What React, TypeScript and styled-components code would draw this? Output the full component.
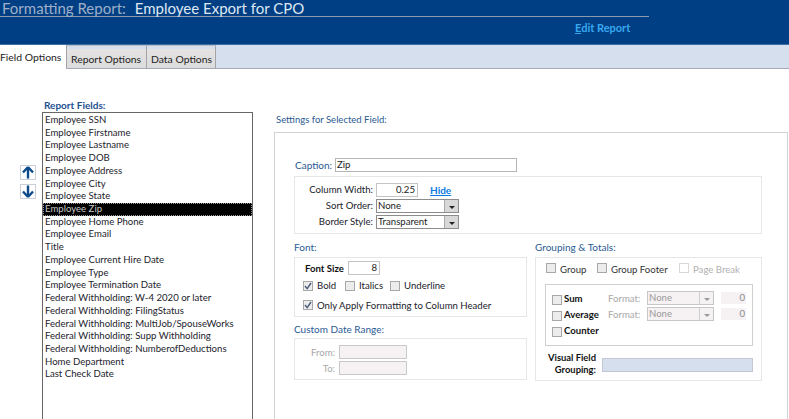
import styled, { createGlobalStyle } from "styled-components"

const GlobalStyle = createGlobalStyle`
  html, body { margin: 0; padding: 0; background: #fff; }
  body { font-family: Lato, "Open Sans", sans-serif; font-size: 9.6px; color: #1c1c2c; }
`

const FIELDS = [
  "Employee SSN",
  "Employee Firstname",
  "Employee Lastname",
  "Employee DOB",
  "Employee Address",
  "Employee City",
  "Employee State",
  "Employee Zip",
  "Employee Home Phone",
  "Employee Email",
  "Title",
  "Employee Current Hire Date",
  "Employee Type",
  "Employee Termination Date",
  "Federal Withholding: W-4 2020 or later",
  "Federal Withholding: FilingStatus",
  "Federal Withholding: MultiJob/SpouseWorks",
  "Federal Withholding: Supp Withholding",
  "Federal Withholding: NumberofDeductions",
  "Home Department",
  "Last Check Date",
]

const Arrow = ({ down }: { down?: boolean }) => (
  <svg width="12" height="13" viewBox="0 0 12 13" style={{ transform: down ? "rotate(180deg)" : undefined }}>
    <path d="M6 1 L11 6.5 M6 1 L1 6.5 M6 1 V12.5" stroke="#0d4a8b" strokeWidth="2.4" fill="none" />
  </svg>
)

const Check = ({ checked, disabled, $mt }: { checked?: boolean; disabled?: boolean; $mt?: number }) => (
  <CheckBox $disabled={disabled} $mt={$mt}>
    {checked && (
      <svg width="10" height="10" viewBox="0 0 10 10">
        <path d="M2 5 L4.2 7.6 L8 2" stroke="#4a5a7a" strokeWidth="1.4" fill="none" />
      </svg>
    )}
  </CheckBox>
)

const Select = ({ value, width, disabled }: { value: string; width: number; disabled?: boolean }) => (
  <SelectBox $width={width} $disabled={disabled}>
    <SelectValue>{value}</SelectValue>
    <SelectButton $disabled={disabled}>
      <svg width="6" height="3" viewBox="0 0 6 3">
        <path d="M0 0 H6 L3 3 Z" fill={disabled ? "#999" : "#222"} />
      </svg>
    </SelectButton>
  </SelectBox>
)

export default function App() {
  return (
    <Page>
      <GlobalStyle />
      <Header>
        <TitleBar>
          <TitleMuted>Formatting Report:</TitleMuted>
          <TitleName>Employee Export for CPO</TitleName>
        </TitleBar>
        <EditLink><u>E</u>dit Report</EditLink>
      </Header>
      <Tabs>
        <Tab $active $width={67}>Field Options</Tab>
        <Tab $width={80}>Report Options</Tab>
        <Tab $width={69}>Data Options</Tab>
      </Tabs>
      <Body>
        <ArrowColumn>
          <ArrowButton><Arrow /></ArrowButton>
          <ArrowButton><Arrow down /></ArrowButton>
        </ArrowColumn>
        <FieldsColumn>
          <FieldsLabel>Report Fields:</FieldsLabel>
          <FieldList>
            {FIELDS.map((f) => (
              <FieldItem key={f} $selected={f === "Employee Zip"}>{f}</FieldItem>
            ))}
          </FieldList>
        </FieldsColumn>
        <SettingsColumn>
          <SettingsLabel>Settings for Selected Field:</SettingsLabel>
          <SettingsPanel>
            <CaptionRow>
              <CaptionLabel>Caption:</CaptionLabel>
              <TextBox $width={182} $height={14}>Zip</TextBox>
            </CaptionRow>
            <ColumnPanel>
              <FormRow>
                <FormLabel>Column Width:</FormLabel>
                <NumberBox $width={42}>0.25</NumberBox>
                <HideLink>Hide</HideLink>
              </FormRow>
              <FormRow>
                <FormLabel>Sort Order:</FormLabel>
                <Select value="None" width={83} />
              </FormRow>
              <FormRow>
                <FormLabel>Border Style:</FormLabel>
                <Select value="Transparent" width={83} />
              </FormRow>
            </ColumnPanel>
            <Columns>
              <LeftColumn>
                <SectionLabel>Font:</SectionLabel>
                <FontPanel>
                  <FontSizeRow>
                    <strong>Font Size</strong>
                    <NumberBox $width={32}>8</NumberBox>
                  </FontSizeRow>
                  <CheckRow>
                    <CheckLabel $width={42}><Check checked />Bold</CheckLabel>
                    <CheckLabel $width={45}><Check />Italics</CheckLabel>
                    <CheckLabel><Check />Underline</CheckLabel>
                  </CheckRow>
                  <OnlyRow><Check checked />Only Apply Formatting to Column Header</OnlyRow>
                </FontPanel>
                <DateLabel>Custom Date Range:</DateLabel>
                <DatePanel>
                  <DateRow><DateText>From:</DateText><DateBox /></DateRow>
                  <DateRow><DateText>To:</DateText><DateBox /></DateRow>
                </DatePanel>
              </LeftColumn>
              <RightColumn>
                <SectionLabel>Grouping &amp; Totals:</SectionLabel>
                <GroupPanel>
                  <GroupRow>
                    <GroupLabel $width={51}><Check $mt={-3} />Group</GroupLabel>
                    <GroupLabel $width={82}><Check $mt={-3} />Group Footer</GroupLabel>
                    <GroupLabel $disabled><Check disabled $mt={-3} />Page Break</GroupLabel>
                  </GroupRow>
                  <TotalsPanel>
                    <TotalRow>
                      <TotalName><Check $mt={4} />Sum</TotalName>
                      <FormatText>Format:</FormatText>
                      <Select value="None" width={67} disabled />
                      <ValueBox>0</ValueBox>
                    </TotalRow>
                    <TotalRow>
                      <TotalName><Check $mt={4} />Average</TotalName>
                      <FormatText>Format:</FormatText>
                      <Select value="None" width={67} disabled />
                      <ValueBox>0</ValueBox>
                    </TotalRow>
                    <TotalRow>
                      <TotalName><Check $mt={4} />Counter</TotalName>
                    </TotalRow>
                  </TotalsPanel>
                  <VisualRow>
                    <VisualLabel>Visual Field<br />Grouping:</VisualLabel>
                    <VisualBar />
                  </VisualRow>
                </GroupPanel>
              </RightColumn>
            </Columns>
          </SettingsPanel>
        </SettingsColumn>
      </Body>
    </Page>
  )
}

const Page = styled.div`
  width: 789px;
  height: 419px;
  overflow: hidden;
  display: flex;
  flex-direction: column;
`

const Header = styled.header`
  height: 44px;
  flex: none;
  background: #003f84;
  border-bottom: 1px solid #3b6ea5;
`

const TitleBar = styled.div`
  width: 649px;
  height: 16px;
  border-bottom: 1px solid #8d9aae;
  display: flex;
  gap: 9px;
  font-size: 15px;
  line-height: 16px;
  white-space: nowrap;
`

const TitleMuted = styled.span`
  color: #9fb0c8;
  margin-left: 2px;
`

const TitleName = styled.span`
  color: #dfe7f2;
`

const EditLink = styled.div`
  margin: 4px 0 0 575px;
  color: #38a8f0;
  font-size: 11px;
  font-weight: 700;
  line-height: 14px;
`

const Tabs = styled.nav`
  height: 24px;
  flex: none;
  background: #d6dfee;
  border-bottom: 1px solid #a6abb8;
  display: flex;
  align-items: stretch;
  box-sizing: border-box;
`

const Tab = styled.div<{ $active?: boolean; $width: number }>`
  box-sizing: border-box;
  width: ${(p) => p.$width}px;
  padding: ${(p) => (p.$active ? "5px 0 0 0" : "6px 0 0 4px")};
  height: ${(p) => (p.$active ? 24 : 23)}px;
  background: ${(p) => (p.$active ? "#fff" : "linear-gradient(#d6dfee 0 3px, #e4e2e2 3px, #dcdcdc)")};
  border-right: 1px solid #a3a3a8;
  border-top: ${(p) => (p.$active ? "0" : "1px solid #b9bcc4")};
  font-size: 10.4px;
  line-height: 14px;
  white-space: nowrap;
  color: #222;
`

const Body = styled.main`
  display: flex;
  flex: 1;
  min-height: 0;
  align-items: flex-start;
`

const ArrowColumn = styled.div`
  width: 42px;
  flex: none;
  box-sizing: border-box;
  padding: 96px 0 0 20px;
  display: flex;
  flex-direction: column;
  gap: 4px;
`

const ArrowButton = styled.div`
  width: 16px;
  height: 15px;
  box-sizing: border-box;
  border: 1px solid #c8cfdb;
  display: flex;
  align-items: center;
  justify-content: center;
`

const FieldsColumn = styled.section`
  width: 211px;
  flex: none;
  padding-top: 29px;
`

const FieldsLabel = styled.div`
  color: #1d4f8f;
  font-weight: 700;
  font-size: 10px;
  line-height: 14px;
  margin-left: 2px;
`

const FieldList = styled.ul`
  margin: 0;
  padding: 1px 0 0;
  list-style: none;
  height: 320px;
  box-sizing: border-box;
  border: 1px solid #666;
`

const FieldItem = styled.li<{ $selected?: boolean }>`
  height: 12.72px;
  line-height: 12.72px;
  padding-left: 2px;
  white-space: nowrap;
  color: ${(p) => (p.$selected ? "#c8c8c8" : "#1c1c2c")};
  background: ${(p) => (p.$selected ? "#000" : "transparent")};
  outline: ${(p) => (p.$selected ? "1px dotted #999" : "0")};
  outline-offset: -1px;
`

const SettingsColumn = styled.section`
  width: 514px;
  flex: none;
  margin-left: 21px;
  padding-top: 44px;
`

const SettingsLabel = styled.div`
  color: #2a5a94;
  font-size: 9.5px;
  line-height: 14px;
  margin-left: 2px;
  margin-bottom: 5px;
`

const SettingsPanel = styled.div`
  box-sizing: border-box;
  height: 300px;
  border: 1px solid #d2d2d2;
  border-bottom: 0;
  padding: 25px 0 0 19px;
`

const CaptionRow = styled.div`
  display: flex;
  align-items: center;
  gap: 4px;
  height: 14px;
  margin-left: 1px;
`

const SectionLabel = styled.div`
  color: #2a5a94;
  font-size: 10px;
  line-height: 13px;
`

const CaptionLabel = styled(SectionLabel)`
  width: 36px;
`

const TextBox = styled.div<{ $width: number; $height: number }>`
  width: ${(p) => p.$width}px;
  height: ${(p) => p.$height}px;
  line-height: ${(p) => p.$height - 2}px;
  box-sizing: border-box;
  border: 1px solid #b5b5b5;
  padding-left: 1px;
  color: #222;
`

const ColumnPanel = styled.div`
  box-sizing: border-box;
  width: 468px;
  height: 58px;
  margin-top: 4px;
  border: 1px solid #e6e6e6;
  padding-top: 5px;
  display: flex;
  flex-direction: column;
  gap: 1px;
`

const FormRow = styled.div`
  display: flex;
  align-items: center;
  height: 15px;
`

const FormLabel = styled.div`
  width: 78px;
  text-align: right;
  margin-right: 3px;
`

const NumberBox = styled.div<{ $width: number }>`
  width: ${(p) => p.$width}px;
  height: 14px;
  line-height: 12px;
  box-sizing: border-box;
  border: 1px solid #c4c4c4;
  padding-right: 2px;
  text-align: right;
  color: #222;
`

const HideLink = styled.a`
  margin-left: 12px;
  color: #0a7be0;
  font-weight: 700;
  font-size: 10px;
  text-decoration: underline;
`

const SelectBox = styled.div<{ $width: number; $disabled?: boolean }>`
  width: ${(p) => p.$width}px;
  height: 14px;
  box-sizing: border-box;
  display: flex;
  border: 1px solid ${(p) => (p.$disabled ? "#c9c6c6" : "#8c8c8c")};
  background: ${(p) => (p.$disabled ? "#f6f2f3" : "#fff")};
  color: ${(p) => (p.$disabled ? "#9a9a9a" : "#222")};
`

const SelectValue = styled.div`
  flex: 1;
  line-height: 12px;
  padding-left: 1px;
`

const SelectButton = styled.div<{ $disabled?: boolean }>`
  width: 14px;
  background: ${(p) => (p.$disabled ? "#f4f2f2" : "#d8d8d8")};
  border-left: 1px solid ${(p) => (p.$disabled ? "#cfcfcf" : "#aaa")};
  display: flex;
  align-items: flex-end;
  justify-content: center;
  padding-bottom: 3px;
  box-sizing: border-box;
`

const Columns = styled.div`
  display: flex;
  margin-top: 7px;
  gap: 8px;
`

const LeftColumn = styled.div`
  width: 233px;
`

const RightColumn = styled.div`
  width: 227px;
`

const FontPanel = styled.div`
  box-sizing: border-box;
  height: 60px;
  margin-top: 3px;
  border: 1px solid #e6e6e6;
  padding: 3px 0 0 8px;
`

const FontSizeRow = styled.div`
  display: flex;
  align-items: center;
  gap: 6px;
  height: 14px;
  margin-left: 2px;
  strong { width: 37px; white-space: nowrap; font-weight: 700; color: #111; }
`

const CheckRow = styled.div`
  display: flex;
  margin-top: 3px;
  height: 15px;
  align-items: center;
`

const CheckLabel = styled.label<{ $width?: number }>`
  display: flex;
  align-items: center;
  gap: 4px;
  width: ${(p) => (p.$width ? `${p.$width}px` : "auto")};
`

const OnlyRow = styled.div`
  display: flex;
  align-items: center;
  gap: 4px;
  margin-top: 5px;
  height: 14px;
`

const CheckBox = styled.span<{ $disabled?: boolean; $mt?: number }>`
  width: 10px;
  height: 10px;
  flex: none;
  box-sizing: border-box;
  margin-top: ${(p) => p.$mt ?? 0}px;
  border: 1px solid ${(p) => (p.$disabled ? "#d8d8d8" : "#a8a8a8")};
  background: ${(p) => (p.$disabled ? "#fff" : "#ececec")};
  display: inline-flex;
  align-items: center;
  justify-content: center;
  svg { flex: none; margin: -1px; }
`

const DateLabel = styled(SectionLabel)`
  margin-top: 6px;
`

const DatePanel = styled.div`
  box-sizing: border-box;
  height: 42px;
  margin-top: 2px;
  border: 1px solid #e6e6e6;
  padding-top: 6px;
  display: flex;
  flex-direction: column;
  gap: 2px;
`

const DateRow = styled.div`
  display: flex;
  align-items: center;
  height: 14px;
`

const DateText = styled.div`
  width: 40px;
  margin-right: 4px;
  text-align: right;
  color: #a8a8a8;
`

const DateBox = styled.div`
  width: 68px;
  height: 14px;
  box-sizing: border-box;
  border: 1px solid #c8c8c8;
  background: #f6f2f3;
`

const GroupPanel = styled.div`
  box-sizing: border-box;
  height: 124px;
  margin-top: 3px;
  border: 1px solid #e6e6e6;
  padding: 4px 0 0 10px;
`

const GroupRow = styled.div`
  display: flex;
  height: 15px;
  align-items: center;
`

const GroupLabel = styled.label<{ $width?: number; $disabled?: boolean }>`
  display: flex;
  align-items: center;
  gap: 4px;
  width: ${(p) => (p.$width ? `${p.$width}px` : "auto")};
  color: ${(p) => (p.$disabled ? "#b0b0b0" : "#333")};
`

const TotalsPanel = styled.div`
  box-sizing: border-box;
  width: 208px;
  height: 62px;
  margin: 7px 0 0 -1px;
  border: 1px solid #cfcfcf;
  padding: 5px 0 0 6px;
`

const TotalRow = styled.div`
  display: flex;
  align-items: center;
  height: 16px;
`

const TotalName = styled.div`
  width: 56px;
  display: flex;
  align-items: center;
  gap: 2px;
  font-weight: 700;
  color: #111;
`

const FormatText = styled.div`
  width: 39px;
  color: #a8a8a8;
`

const ValueBox = styled.div`
  width: 24px;
  height: 12px;
  line-height: 12px;
  margin-left: 7px;
  padding-right: 1px;
  background: #f6f2f3;
  color: #8a8a8a;
  text-align: right;
`

const VisualRow = styled.div`
  display: flex;
  align-items: center;
  margin: 5px 0 0 -1px;
  height: 26px;
`

const VisualLabel = styled.div`
  width: 51px;
  text-align: right;
  font-weight: 700;
  font-size: 9.4px;
  line-height: 12px;
  color: #111;
  margin-right: 6px;
  white-space: nowrap;
`

const VisualBar = styled.div`
  width: 151px;
  height: 14px;
  box-sizing: border-box;
  align-self: flex-start;
  margin-top: 7px;
  background: #d6dfee;
  border: 1px solid #c4c8d4;
`
